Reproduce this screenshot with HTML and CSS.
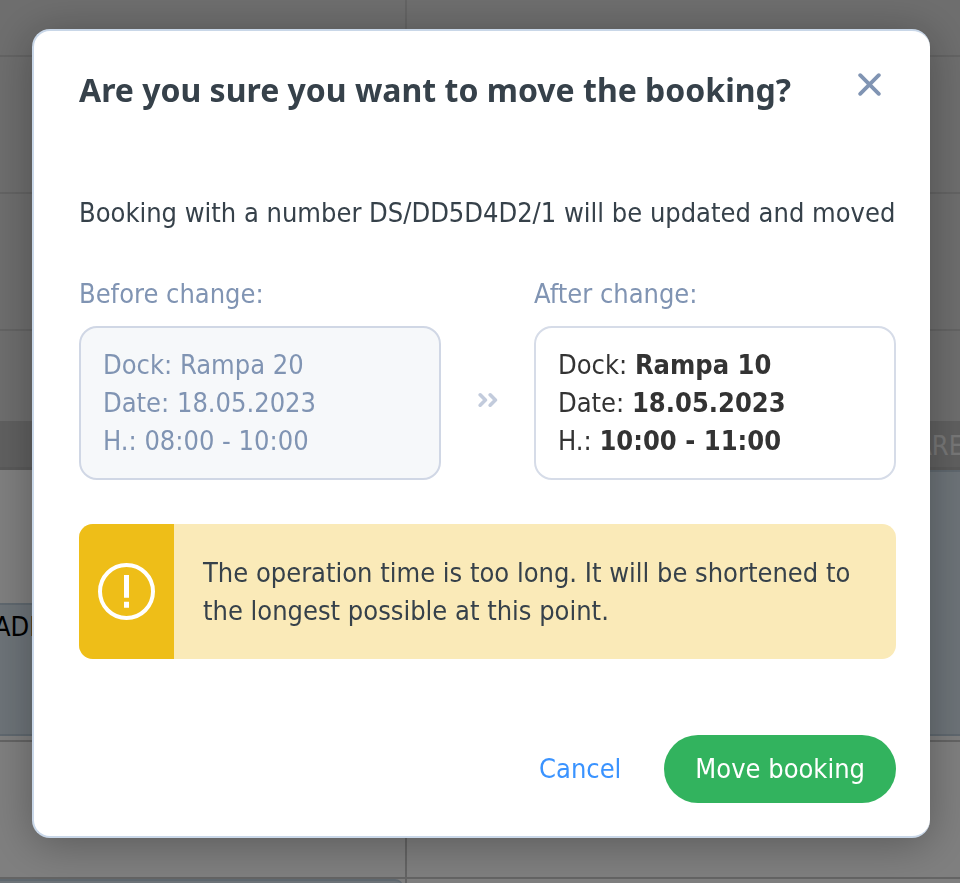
FILE: index.html
```html
<!DOCTYPE html>
<html lang="en">
<head>
  <meta charset="UTF-8" />
  <meta name="viewport" content="width=device-width, initial-scale=1.0" />
  <title>Move booking</title>
  <link rel="stylesheet" href="styles.css">
</head>
<body>
  <div class="schedule" aria-hidden="true">
    <div class="dock">
      <div class="slot closed short"></div>
      <div class="slot closed"></div>
      <div class="slot closed"></div>
      <div class="slot closed last"></div>
      <div class="band"></div>
      <div class="slot busy">
        <div class="booking half">ADI</div>
      </div>
      <div class="slot"></div>
      <div class="booking next"></div>
    </div>
    <div class="dock">
      <div class="slot closed short"></div>
      <div class="slot closed"></div>
      <div class="slot closed"></div>
      <div class="slot closed last"></div>
      <div class="band">ARE</div>
      <div class="slot busy">
        <div class="booking"></div>
      </div>
      <div class="slot"></div>
    </div>
  </div>

  <div class="backdrop">
    <div class="modal" role="dialog" aria-modal="true" aria-labelledby="modalTitle">
      <div class="modal-header">
        <h2 id="modalTitle">Are you sure you want to move the booking?</h2>
        <button class="close" aria-label="Close">
          <svg width="24" height="24" viewBox="0 0 24 24" fill="none" stroke="currentColor" stroke-width="3.8" stroke-linecap="round">
            <path d="M2.200 2.200 20.800 20.800M20.800 2.200 2.200 20.800" />
          </svg>
        </button>
      </div>

      <p class="message">Booking with a number DS/DD5D4D2/1 will be updated and moved</p>

      <div class="changes">
        <div class="change before">
          <h3>Before change:</h3>
          <div class="details">
            <div>Dock: Rampa 20</div>
            <div>Date: 18.05.2023</div>
            <div>H.: 08:00 - 10:00</div>
          </div>
        </div>
        <svg class="arrows" width="20" height="16" viewBox="0 0 20 16" fill="none" stroke="currentColor" stroke-width="3.6" stroke-linecap="round" stroke-linejoin="round">
          <path d="M2.2 2.8 7.4 8 2.2 13.2M12.2 2.8 17.4 8 12.2 13.2" />
        </svg>
        <div class="change after">
          <h3>After change:</h3>
          <div class="details">
            <div>Dock: <b>Rampa 10</b></div>
            <div>Date: <b>18.05.2023</b></div>
            <div>H.: <b>10:00 - 11:00</b></div>
          </div>
        </div>
      </div>

      <div class="warning">
        <div class="warning-icon">
          <svg width="57" height="57" viewBox="0 0 57 57">
            <circle cx="28.5" cy="28.5" r="26.5" fill="none" stroke="#fff" stroke-width="4" />
            <path d="M26 12h5v22.700h-5zM26 38.700h5v6h-5z" fill="#fff" />
          </svg>
        </div>
        <p>The operation time is too long. It will be shortened to the longest possible at this point.</p>
      </div>

      <div class="actions">
        <button class="cancel">Cancel</button>
        <button class="confirm">Move booking</button>
      </div>
    </div>
  </div>
</body>
</html>
```
FILE: styles.css
```css
* {
  box-sizing: border-box;
}
body {
  margin: 0;
  font-family: Tahoma, 'DejaVu Sans Condensed', 'Noto Sans', sans-serif;
  font-size: 27px;
  line-height: 38px;
  color: #36414a;
}
h2, h3, p {
  margin: 0;
}
button {
  padding: 0;
  border: none;
  background: none;
  font: inherit;
  cursor: pointer;
}

/* schedule behind the modal */
.schedule {
  display: grid;
  grid-template-columns: 407fr 553fr;
  height: 100vh;
  overflow: hidden;
  background: #fff;
}
.dock {
  min-width: 0;
}
.dock:first-child {
  border-right: 2px solid #c8c8c8;
}
.dock:last-child {
  margin-right: -4px;
}
.slot {
  height: 137px;
  border-bottom: 2px solid #c8c8c8;
}
.closed {
  background: #dcdcdc;
}
.short {
  height: 57px;
}
.last {
  height: 90px;
  border-bottom: none;
}
.band {
  height: 49px;
  border-bottom: 3px solid #b4b4b4;
  background: #c0c0c0;
  color: #f0f0f0;
  text-align: right;
  line-height: 50px;
}
.busy {
  display: flex;
  flex-direction: column;
  justify-content: flex-end;
  height: 272px;
  padding-bottom: 4px;
}
.booking {
  flex: 1;
  border: solid #bfd0de;
  border-width: 2px 0;
  background: #dae7f1;
  color: #000;
}
.half {
  flex: none;
  height: 133px;
  padding-top: 3px;
  text-indent: -6px;
}
.next {
  height: 40px;
  border-radius: 0 8px 0 0;
  margin-right: 2px;
}

.backdrop {
  position: fixed;
  inset: 0;
  overflow: auto;
  padding: 29px 30px 32px 32px;
  background: rgba(0, 0, 0, 0.5);
}
.modal {
  padding: 40px 34px 33px 45px;
  background: #fff;
  border: 2px solid #c9d7e8;
  border-right: none;
  border-radius: 18px;
  box-shadow: 0 6px 44px rgba(0, 0, 0, 0.3);
}
.modal-header {
  display: flex;
  justify-content: space-between;
  align-items: flex-start;
  margin-bottom: 85px;
  padding-right: 14px;
}
h2 {
  font-family: Tahoma, 'Noto Sans', sans-serif;
  font-size: 32px;
  font-weight: bold;
}
.close {
  display: flex;
  margin-top: 2px;
  color: #8094b3;
}
.message {
  margin-bottom: 43px;
}
.changes {
  display: flex;
  justify-content: space-between;
  align-items: flex-end;
  margin-bottom: 44px;
}
.change {
  width: 362px;
}
h3 {
  margin-bottom: 13px;
  color: #8094b3;
  font-size: 27px;
  font-weight: normal;
}
.details {
  padding: 18px 22px;
  border: 2px solid #d6dce8;
  border-radius: 18px;
  color: #333;
}
.before .details {
  border-color: #d0d7e5;
  background: #f6f8fa;
  color: #8094b3;
}
.arrows {
  flex: none;
  margin-bottom: 72px;
  color: #c2cbdc;
}
.warning {
  display: flex;
  overflow: hidden;
  margin-bottom: 76px;
  border-radius: 14px;
  background: #faeab8;
}
.warning-icon {
  display: flex;
  flex: none;
  align-items: center;
  justify-content: center;
  width: 95px;
  background: #eebe18;
}
.warning p {
  padding: 30px 29px 29px;
}
.actions {
  display: flex;
  justify-content: flex-end;
  gap: 43px;
}
.cancel {
  color: #3a93ff;
}
.confirm {
  height: 68px;
  padding: 0 31px;
  border-radius: 34px;
  background: #32b35e;
  color: #fff;
}
```
